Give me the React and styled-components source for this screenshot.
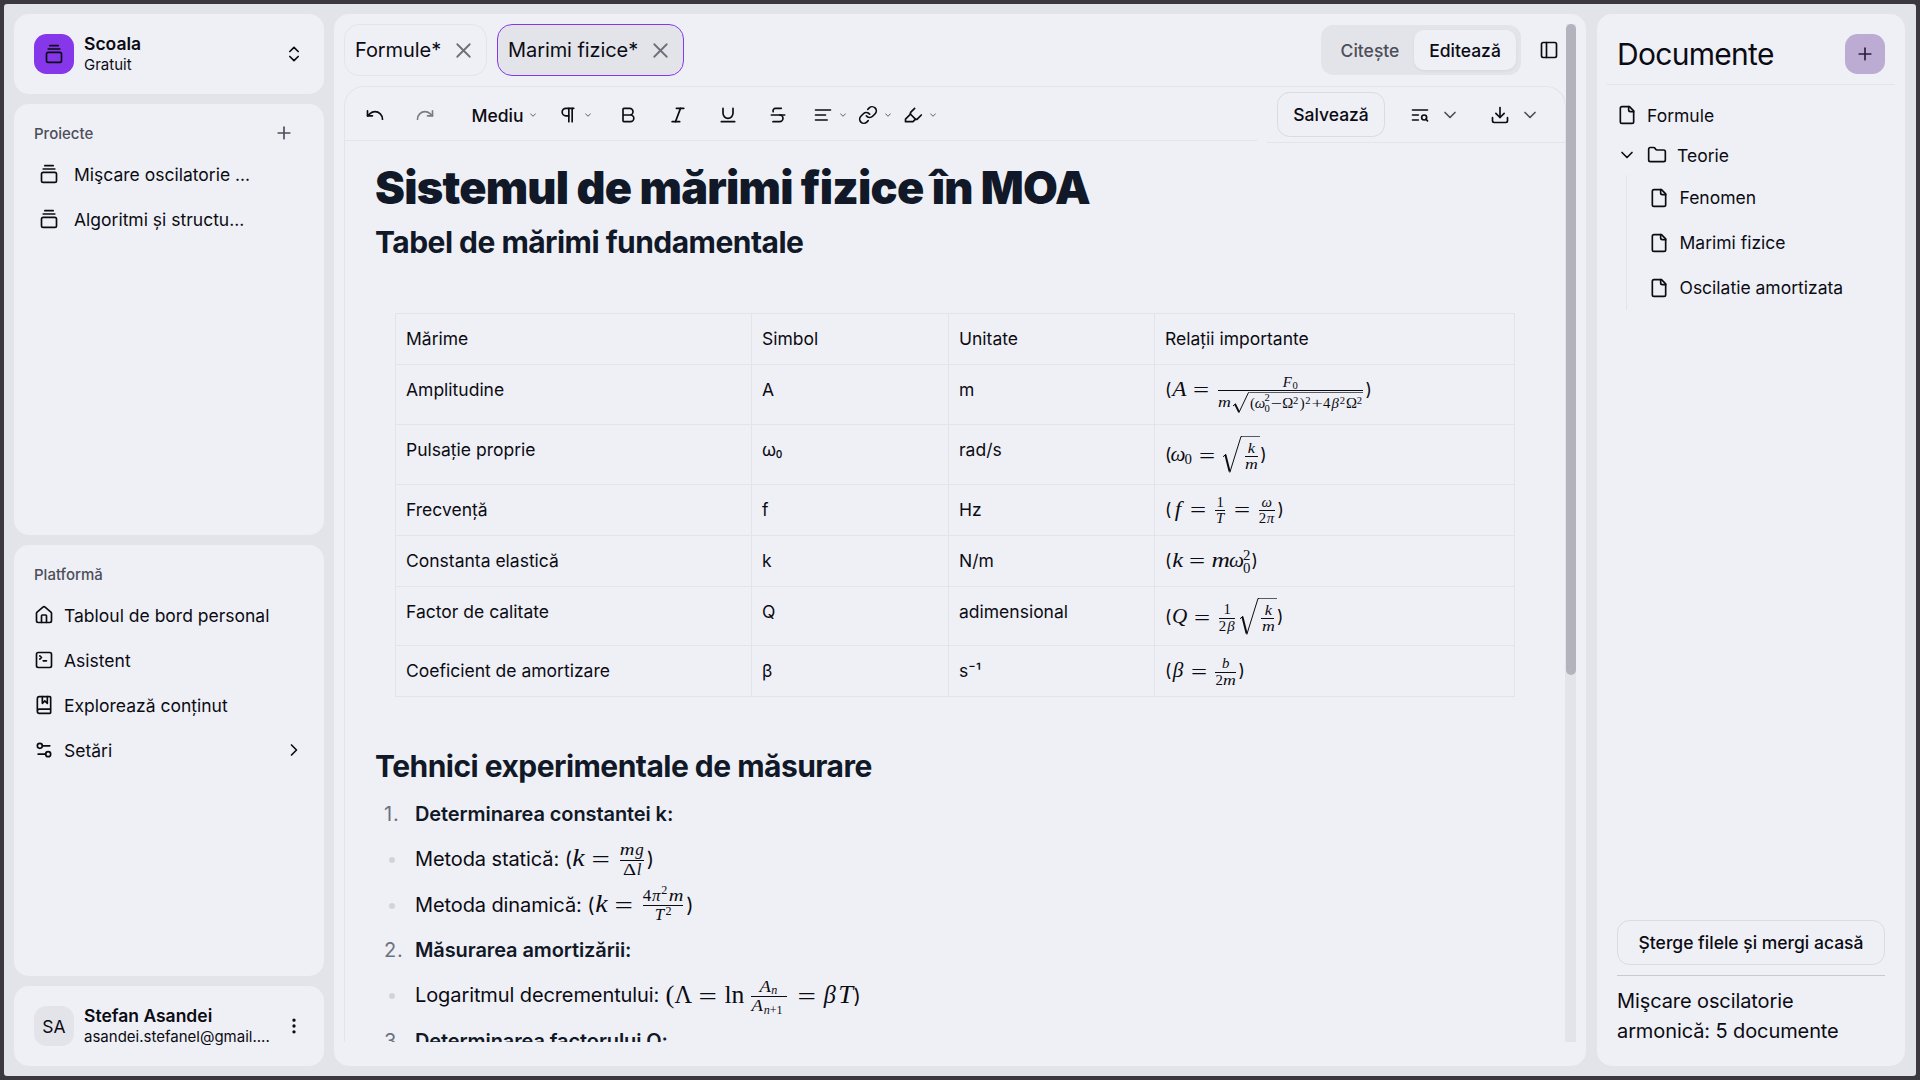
import React from "react";
import styled, { createGlobalStyle, css } from "styled-components";
import {
  House,
  SquareTerminal,
  BookMarked,
  Settings2,
  GalleryVerticalEnd,
  ChevronsUpDown,
  ChevronRight,
  ChevronDown,
  EllipsisVertical,
  Plus,
  X,
  Undo,
  Redo,
  Pilcrow,
  Bold,
  Italic,
  Underline,
  Strikethrough,
  Link,
  Highlighter,
  Download,
  PanelLeft,
  Folder,
} from "lucide-react";

const GlobalStyle = createGlobalStyle`
  * { box-sizing: border-box; }
  body {
    margin: 0;
    background: #3b393f;
    color: #0b0b14;
    font-family: Inter, "Liberation Sans", sans-serif;
    font-size: 17.5px;
  }
  svg { display: block; flex-shrink: 0; }
`;

const c = {
  bg: "#e3e4e9",
  panel: "#eff0f5",
  line: "#e3e4e9",
  border: "#dadbe0",
  muted: "#4d4e5a",
  purple: "#8637ea",
};

/* ---------- hand-drawn glyphs ---------- */

const Glyph = ({ d, size = 20, children }) => (
  <svg
    width={size}
    height={size}
    viewBox="0 0 24 24"
    fill="none"
    stroke="currentColor"
    strokeWidth="2"
    strokeLinecap="round"
    strokeLinejoin="round"
  >
    {d.map((p) => (
      <path key={p} d={p} />
    ))}
    {children}
  </svg>
);

const FileIcon = () => (
  <Glyph
    d={[
      "M15 2H6a2 2 0 0 0-2 2v16a2 2 0 0 0 2 2h12a2 2 0 0 0 2-2V7Z",
      "M14 2v4a2 2 0 0 0 2 2h4",
    ]}
  />
);
const AlignLeftIcon = () => <Glyph d={["M21 6H3", "M15 12H3", "M17 18H3"]} />;
const TextSearchIcon = () => (
  <Glyph d={["M21 6H3", "M10 12H3", "M10 18H3", "m21 19-1.9-1.9"]}>
    <circle cx="17" cy="15" r="3" />
  </Glyph>
);

/* ---------- page frame ---------- */

const Page = styled.div`
  width: 1920px;
  height: 1080px;
  padding: 4px;
  background: #3b393f;
`;
const Frame = styled.div`
  height: 100%;
  display: grid;
  grid-template-columns: 310px 1252px 309px;
  column-gap: 10px;
  padding: 10px 11px 10px 10px;
  background: ${c.bg};
  border-radius: 3px;
`;
const Column = styled.div`
  display: flex;
  flex-direction: column;
  gap: 10px;
  min-height: 0;
`;
const Panel = styled.section`
  background: ${c.panel};
  border-radius: 15px;
  min-height: 0;
`;

/* ---------- left sidebar ---------- */

const AccountCard = styled(Panel)`
  height: 80px;
  display: flex;
  align-items: center;
  padding: 0 20px;
`;
const Badge = styled.div`
  width: 40px;
  height: 40px;
  border-radius: 12.5px;
  display: grid;
  place-items: center;
  background: ${(p) => (p.$brand ? c.purple : c.bg)};
`;
const AccountText = styled.div`
  flex: 1;
  padding-left: 10px;
  padding-bottom: 1px;
  min-width: 0;
`;
const AccountName = styled.div`
  font-weight: 600;
  line-height: 21px;
`;
const AccountDetail = styled.div`
  font-size: 15px;
  line-height: 21px;
  white-space: nowrap;
`;
const MenuCard = styled(Panel)`
  flex: 1;
  padding: 10px 10px;
`;
const GroupLabel = styled.div`
  height: 38.5px;
  margin-bottom: -1px;
  padding: 0 20px 0 10px;
  display: flex;
  align-items: center;
  justify-content: space-between;
  font-size: 15px;
  font-weight: 500;
  color: ${c.muted};
`;
const MenuItem = styled.div`
  height: 45px;
  display: flex;
  align-items: center;
  gap: ${(p) => (p.$wide ? 15 : 10)}px;
  padding: 0 10px 0 ${(p) => (p.$wide ? 15 : 10)}px;
  & > span {
    flex: 1;
  }
`;

/* ---------- editor ---------- */

const EditorPanel = styled(Panel)`
  padding: 10px 10px 24px;
  display: flex;
`;
const EditorBody = styled.div`
  width: 1222px;
  display: flex;
  flex-direction: column;
  min-height: 0;
  overflow: hidden;
`;
const ScrollTrack = styled.div`
  width: 10px;
  background: ${c.bg};
`;
const ScrollThumb = styled.div`
  height: 651px;
  border-radius: 5px;
  background: #b2b3bd;
`;
const TabBar = styled.div`
  height: 52px;
  flex-shrink: 0;
  display: flex;
  align-items: center;
`;
const Tab = styled.div`
  height: 52px;
  margin-right: 10px;
  padding: 0 10px;
  border: 1px solid ${(p) => (p.$active ? c.purple : c.line)};
  background: ${(p) => (p.$active ? c.bg : "transparent")};
  border-radius: 15px;
  display: flex;
  align-items: center;
  font-size: 20px;
  letter-spacing: -0.08px;
  white-space: nowrap;
  width: ${(p) => p.$w}px;
  justify-content: space-between;
  & svg {
    color: #6d6e78;
  }
`;
const Segmented = styled.div`
  margin-left: auto;
  width: 200px;
  height: 50px;
  padding: 5px;
  border-radius: 12.5px;
  background: ${c.bg};
  display: flex;
  font-weight: 500;
`;
const Segment = styled.div`
  width: ${(p) => p.$w}px;
  display: grid;
  place-items: center;
  border-radius: 10px;
  color: ${(p) => (p.$active ? "#0b0b14" : c.muted)};
  ${(p) =>
    p.$active &&
    css`
      background: ${c.panel};
      box-shadow: 0 1px 3px rgba(0, 0, 0, 0.06);
    `}
`;
const PanelToggle = styled.div`
  margin: 0 7px 0 18px;
`;
const Sheet = styled.div`
  margin-top: 10px;
  flex: 1;
  min-height: 0;
  border: 1px solid ${c.line};
  border-bottom: 0;
  border-radius: 20px 20px 0 0;
`;
const Toolbar = styled.div`
  display: flex;
  justify-content: space-between;
  align-items: flex-start;
  height: 56px;
`;
const ToolsLeft = styled.div`
  width: 912px;
  height: 54px;
  padding-left: 5px;
  display: flex;
  align-items: center;
  border-bottom: 1px solid ${c.line};
`;
const ToolsRight = styled.div`
  width: 298px;
  height: 56px;
  padding-left: 10px;
  display: flex;
  align-items: center;
  border-bottom: 1px solid ${c.line};
`;
const ToolButton = styled.div`
  width: 50px;
  height: 50px;
  display: grid;
  place-items: center;
  padding-top: 3px;
  opacity: ${(p) => (p.$disabled ? 0.5 : 1)};
`;
const ToolMenu = styled.div`
  display: flex;
  align-items: center;
  gap: ${(p) => p.$gap || 5}px;
  padding-top: 3px;
  margin: 0 10px 0 ${(p) => p.$lead || 0}px;
  font-weight: 500;
`;
const SmallChevron = styled(ChevronDown)`
  opacity: 0.75;
`;
const OutlineButton = styled.div`
  height: 45px;
  width: ${(p) => p.$w};
  display: grid;
  place-items: center;
  border: 1px solid ${c.border};
  border-radius: 12.5px;
  font-weight: 500;
`;
const SplitMenu = styled.div`
  display: flex;
  align-items: center;
  gap: 10px;
  margin-left: ${(p) => p.$lead}px;
  padding-top: 1px;
  & svg:last-child {
    color: ${c.muted};
  }
`;

/* ---------- document ---------- */

const Doc = styled.article`
  padding: 20px 50px 0 30px;
`;
const H1 = styled.h1`
  margin: 0;
  font-size: 45px;
  line-height: 50px;
  font-weight: 900;
  letter-spacing: -0.78px;
  color: #111827;
`;
const H2 = styled.h2`
  margin: ${(p) => p.$top}px 0 0;
  font-size: 30px;
  line-height: 40px;
  font-weight: 700;
  letter-spacing: -0.53px;
  color: #111827;
`;
const Table = styled.div`
  margin: 51px 0 0 20px;
  width: 1120px;
  border: 1px solid ${c.line};
  border-width: 1px 0 0 1px;
`;
const Row = styled.div`
  display: grid;
  grid-template-columns: 356px 197px 206px 360px;
  height: ${(p) => p.$h}px;
`;
const Cell = styled.div`
  border: 1px solid ${c.line};
  border-width: 0 1px 1px 0;
  padding: 10px 10px 0;
  line-height: 30px;
`;
const LowZero = styled.span`
  font-family: "Noto Sans", sans-serif;
  line-height: 1;
`;
const List = styled.div`
  padding-top: 5px;
  font-size: 20px;
  letter-spacing: -0.1px;
`;
const ListItem = styled.div`
  height: 45.45px;
  display: flex;
  align-items: center;
  white-space: pre;
`;
const Marker = styled.div`
  width: 40px;
  color: #6b7280;
  padding-left: 9px;
  letter-spacing: 0.8px;
`;
const Bullet = styled.div`
  width: 6px;
  height: 6px;
  margin: 2px 20px 0 14px;
  border-radius: 50%;
  background: #d1d5db;
`;
const Strong = styled.strong`
  font-weight: 600;
  color: #111827;
`;

const Formula = styled.div`
  display: flex;
  align-items: center;
  white-space: nowrap;
  color: #0b0b14;
  font-family: "Liberation Serif", serif;
  font-size: ${(p) => p.$size || 21.175}px;
  letter-spacing: 0;
  height: ${(p) => p.$h || 30}px;
  padding-top: ${(p) => p.$drop || 1.2}px;
  line-height: 1;
`;
const Paren = styled.span`
  font-family: Inter, sans-serif;
  font-size: ${(p) => p.$size || 17.5}px;
  padding-bottom: 0.12em;
`;
const SymBox = styled.span`
  display: flex;
  justify-content: center;
  width: ${(p) => p.$w}em;
  padding-bottom: ${(p) => (p.$script ? 0 : 0.17)}em;
  font-style: ${(p) => (p.$up ? "normal" : "italic")};
  & > span {
    transform: scaleX(${(p) => p.$sx || 1});
  }
`;
const Sym = ({ w, up, script, sx, children }) => (
  <SymBox $w={w} $up={up} $script={script} $sx={sx}>
    <span>{children}</span>
  </SymBox>
);
const RelBox = styled.span`
  display: flex;
  justify-content: center;
  width: 0.778em;
  margin: 0 0.278em;
  & > span {
    transform: scaleX(1.35);
  }
`;
const Eq = () => (
  <RelBox>
    <span>=</span>
  </RelBox>
);
const Frac = styled.span`
  display: flex;
  flex-direction: column;
  align-items: center;
  font-size: 0.7em;
  margin: 0 0.17em;
`;
const Num = styled.span`
  display: flex;
  justify-content: center;
  height: ${(p) => p.$half || 1.25}em;
  align-self: stretch;
  align-items: flex-end;
  border-bottom: 1px solid currentColor;
  line-height: 1.1;
`;
const Den = styled.span`
  display: flex;
  justify-content: center;
  height: ${(p) => p.$half || 1.25}em;
  align-items: flex-start;
  line-height: 1.02;
  margin-bottom: -1px;
`;
const Scripts = styled.span`
  display: flex;
  flex-direction: column;
  align-items: flex-start;
  font-size: 0.7em;
  line-height: ${(p) => p.$lh || 0.9};
  width: 0.57em;
  padding-top: ${(p) => p.$down || 0}em;
`;
/* a raised or lowered index inside a fraction line */
const Index = styled.span`
  display: flex;
  width: ${(p) => p.$w || 0.43}em;
  & > span {
    font-size: 0.715em;
    transform: translateY(${(p) => p.$y}px);
  }
`;
const RootBox = styled.span`
  display: flex;
  height: ${(p) => p.$h}px;
`;
const RootBody = styled.span`
  display: flex;
  align-items: center;
  border-top: 1px solid #5a5a66;
`;
const BigRoot = ({ children }) => (
  <RootBox $h={40}>
    <svg width="21" height="40" viewBox="0 0 21 40" fill="none" stroke="#0b0b14">
      <path d="M2 20.8 L5 18.2" strokeWidth="1" />
      <path d="M4.4 18.8 L8.6 35.5" strokeWidth="2" />
      <path d="M8.8 36.5 L20 0.5 H21" strokeWidth="1" />
    </svg>
    <RootBody>{children}</RootBody>
  </RootBox>
);
const SmallRoot = ({ children }) => (
  <RootBox $h={21}>
    <svg width="18.5" height="21" viewBox="0 0 18.5 21" fill="none" stroke="#0b0b14">
      <path d="M2 14 L4.6 11.8" strokeWidth="1" />
      <path d="M4 12 L8 20" strokeWidth="1.8" />
      <path d="M7.8 20.8 L17.5 0.5 H18.5" strokeWidth="1" />
    </svg>
    <RootBody>{children}</RootBody>
  </RootBox>
);
const AmplitudeDen = styled.span`
  display: flex;
  align-items: center;
  padding-top: 1px;
  line-height: 1;
`;
const Stack = styled.span`
  display: flex;
  flex-direction: column;
  width: 0.43em;
  padding-bottom: ${(p) => (p.$single ? 6.6 : 0)}px;
  & > span {
    font-size: 0.715em;
    line-height: 11px;
  }
`;
const Spacer = styled.span`
  width: 0.167em;
`;

const S = (props) => <Sym script {...props} />;

const KOverM = () => (
  <Frac>
    <Num><S w={0.878} sx={1.1}>k</S></Num>
    <Den><S w={0.878} sx={1.2}>m</S></Den>
  </Frac>
);
const Amplitude = () => (
  <Formula $h={30.6}>
    <Paren>(</Paren>
    <Sym w={0.75} sx={1.1}>A</Sym>
    <Eq />
    <Frac>
      <Num $half={1.7}>
        <S w={0.68}>F</S>
        <Index $y={1}><span>0</span></Index>
      </Num>
      <Den $half={1.7}>
        <AmplitudeDen>
          <S w={0.878} sx={1.2}>m</S>
          <SmallRoot>
            <S up w={0.389}>(</S>
            <S w={0.622}>ω</S>
            <Stack>
              <span>2</span>
              <span>0</span>
            </Stack>
            <S up w={0.778} sx={1.35}>−</S>
            <S up w={0.722}>Ω</S>
            <Stack $single><span>2</span></Stack>
            <S up w={0.389}>)</S>
            <Stack $single><span>2</span></Stack>
            <S up w={0.778} sx={1.35}>+</S>
            <S up w={0.5}>4</S>
            <S w={0.62}>β</S>
            <Stack $single><span>2</span></Stack>
            <S up w={0.722}>Ω</S>
            <Stack $single><span>2</span></Stack>
          </SmallRoot>
        </AmplitudeDen>
      </Den>
    </Frac>
    <Paren>)</Paren>
  </Formula>
);
const Omega = () => (
  <Formula $h={41}>
    <Paren>(</Paren>
    <Sym w={0.622}>ω</Sym>
    <Scripts $down={0.49} $lh={1}><span>0</span></Scripts>
    <Eq />
    <BigRoot><KOverM /></BigRoot>
    <Paren>)</Paren>
  </Formula>
);
const Frequency = () => (
  <Formula $h={30.6}>
    <Paren>(</Paren>
    <Sym w={0.597} sx={1.1}>f</Sym>
    <Eq />
    <Frac>
      <Num><S up w={0.72}>1</S></Num>
      <Den><S w={0.72}>T</S></Den>
    </Frac>
    <Eq />
    <Frac>
      <Num><S w={1.1}>ω</S></Num>
      <Den><S up w={0.5}>2</S><S w={0.6}>π</S></Den>
    </Frac>
    <Paren>)</Paren>
  </Formula>
);
const Elastic = () => (
  <Formula $h={30.6}>
    <Paren>(</Paren>
    <Sym w={0.55} sx={1.15}>k</Sym>
    <Eq />
    <Sym w={0.878} sx={1.2}>m</Sym>
    <Sym w={0.622}>ω</Sym>
    <Scripts><span>2</span><span>0</span></Scripts>
    <Paren>)</Paren>
  </Formula>
);
const Quality = () => (
  <Formula $h={41}>
    <Paren>(</Paren>
    <Sym w={0.79}>Q</Sym>
    <Eq />
    <Frac>
      <Num><S up w={1.12}>1</S></Num>
      <Den><S up w={0.5}>2</S><S w={0.62}>β</S></Den>
    </Frac>
    <BigRoot><KOverM /></BigRoot>
    <Paren>)</Paren>
  </Formula>
);
const Damping = () => (
  <Formula $h={31}>
    <Paren>(</Paren>
    <Sym w={0.62}>β</Sym>
    <Eq />
    <Frac>
      <Num><S w={1.4}>b</S></Num>
      <Den><S up w={0.5}>2</S><S w={0.878} sx={1.2}>m</S></Den>
    </Frac>
    <Paren>)</Paren>
  </Formula>
);
const StaticMethod = () => (
  <Formula $size={24.2} $drop={2.6}>
    <Paren $size={20}>(</Paren>
    <Sym w={0.54} sx={1.15}>k</Sym>
    <Eq />
    <Frac>
      <Num><S w={0.878} sx={1.2}>m</S><S w={0.52}>g</S></Num>
      <Den><S up w={0.833} sx={1.2}>Δ</S><S w={0.32}>l</S></Den>
    </Frac>
    <Paren $size={20}>)</Paren>
  </Formula>
);
const DynamicMethod = () => (
  <Formula $size={24.2} $drop={2.6}>
    <Paren $size={20}>(</Paren>
    <Sym w={0.54} sx={1.15}>k</Sym>
    <Eq />
    <Frac>
      <Num>
        <S up w={0.5}>4</S>
        <S w={0.6}>π</S>
        <Index $y={-8.5}><span>2</span></Index>
        <S w={0.878} sx={1.2}>m</S>
      </Num>
      <Den>
        <S w={0.72}>T</S>
        <Index $y={-1}><span>2</span></Index>
      </Den>
    </Frac>
    <Paren $size={20}>)</Paren>
  </Formula>
);
const Decrement = () => (
  <Formula $size={24.2} $drop={2.6}>
    <Sym up w={0.42} sx={1.1}>(</Sym>
    <Sym up w={0.694}>Λ</Sym>
    <Eq />
    <Sym up w={0.834} sx={1.06}>ln</Sym>
    <Spacer />
    <Frac>
      <Num $half={1.5}>
        <S w={0.75} sx={1.1}>A</S>
        <Index $w={0.5} $y={1}><span><i>n</i></span></Index>
      </Num>
      <Den $half={1.5}>
        <S w={0.75} sx={1.1}>A</S>
        <Index $w={1.4} $y={7}><span><i>n</i>+1</span></Index>
      </Den>
    </Frac>
    <Eq />
    <Sym w={0.6}>β</Sym>
    <Sym w={0.68} sx={1.1}>T</Sym>
    <Paren $size={20}>)</Paren>
  </Formula>
);

const rows = [
  [51, "Mărime", "Simbol", "Unitate", "Relații importante"],
  [60, "Amplitudine", "A", "m", <Amplitude />],
  [60, "Pulsație proprie", <>ω<LowZero>₀</LowZero></>, "rad/s", <Omega />],
  [51, "Frecvență", "f", "Hz", <Frequency />],
  [51, "Constanta elastică", "k", "N/m", <Elastic />],
  [59, "Factor de calitate", "Q", "adimensional", <Quality />],
  [51, "Coeficient de amortizare", "β", "s⁻¹", <Damping />],
];

/* ---------- documents panel ---------- */

const DocsPanel = styled(Panel)`
  margin-left: 1px;
  display: flex;
  flex-direction: column;
  padding: 0 10px;
`;
const DocsHeader = styled.div`
  height: 71px;
  padding: 9px 10px 0;
  display: flex;
  align-items: center;
  justify-content: space-between;
  border-bottom: 1px solid ${c.line};
  font-size: 30px;
  letter-spacing: -0.7px;
`;
const AddButton = styled.div`
  width: 40px;
  height: 40px;
  border-radius: 12.5px;
  background: #bcabd3;
  color: #2b1f3c;
  display: grid;
  place-items: center;
`;
const Tree = styled.div`
  flex: 1;
  padding: 10px 10px 0;
`;
const TreeItem = styled.div`
  height: ${(p) => p.$h}px;
  display: flex;
  align-items: center;
  gap: ${(p) => p.$gap || 10}px;
`;
const Branch = styled.div`
  margin-left: 9px;
  padding-left: 22px;
  border-left: 1px solid ${c.line};
`;
const DocsFooter = styled.div`
  padding: 0 10px;
  height: 146px;
`;
const FooterText = styled.div`
  margin-top: 10px;
  padding-top: 10px;
  border-top: 1px solid #c9cad1;
  font-size: 20px;
  line-height: 30px;
  letter-spacing: -0.1px;
`;

export default function App() {
  return (
    <Page>
      <GlobalStyle />
      <Frame>
        <Column>
          <AccountCard>
            <Badge $brand><GalleryVerticalEnd size={20} /></Badge>
            <AccountText>
              <AccountName>Scoala</AccountName>
              <AccountDetail>Gratuit</AccountDetail>
            </AccountText>
            <ChevronsUpDown size={20} />
          </AccountCard>
          <MenuCard>
            <GroupLabel>Proiecte<Plus size={20} /></GroupLabel>
            <MenuItem $wide><GalleryVerticalEnd size={20} /><span>Mişcare oscilatorie ...</span></MenuItem>
            <MenuItem $wide><GalleryVerticalEnd size={20} /><span>Algoritmi și structu...</span></MenuItem>
          </MenuCard>
          <MenuCard>
            <GroupLabel>Platformă</GroupLabel>
            <MenuItem><House size={20} /><span>Tabloul de bord personal</span></MenuItem>
            <MenuItem><SquareTerminal size={20} /><span>Asistent</span></MenuItem>
            <MenuItem><BookMarked size={20} /><span>Explorează conținut</span></MenuItem>
            <MenuItem><Settings2 size={20} /><span>Setări</span><ChevronRight size={20} /></MenuItem>
          </MenuCard>
          <AccountCard>
            <Badge>SA</Badge>
            <AccountText>
              <AccountName>Stefan Asandei</AccountName>
              <AccountDetail>asandei.stefanel@gmail....</AccountDetail>
            </AccountText>
            <EllipsisVertical size={20} />
          </AccountCard>
        </Column>

        <EditorPanel>
          <EditorBody>
            <TabBar>
              <Tab $w={143}>Formule*<X size={25} strokeWidth={1.7} /></Tab>
              <Tab $w={187} $active>Marimi fizice*<X size={25} strokeWidth={1.7} /></Tab>
              <Segmented>
                <Segment $w={88}>Citește</Segment>
                <Segment $w={102} $active>Editează</Segment>
              </Segmented>
              <PanelToggle><PanelLeft size={20} /></PanelToggle>
            </TabBar>
            <Sheet>
              <Toolbar>
                <ToolsLeft>
                  <ToolButton><Undo size={20} /></ToolButton>
                  <ToolButton $disabled><Redo size={20} /></ToolButton>
                  <ToolMenu $lead={21.5} $gap={4.5}>Mediu<SmallChevron size={10} /></ToolMenu>
                  <ToolMenu $lead={10}><Pilcrow size={20} /><SmallChevron size={10} /></ToolMenu>
                  <ToolButton><Bold size={20} /></ToolButton>
                  <ToolButton><Italic size={20} /></ToolButton>
                  <ToolButton><Underline size={20} /></ToolButton>
                  <ToolButton><Strikethrough size={20} /></ToolButton>
                  <ToolMenu $lead={10}><AlignLeftIcon /><SmallChevron size={10} /></ToolMenu>
                  <ToolMenu><Link size={20} /><SmallChevron size={10} /></ToolMenu>
                  <ToolMenu><Highlighter size={20} /><SmallChevron size={10} /></ToolMenu>
                </ToolsLeft>
                <ToolsRight>
                  <OutlineButton $w="108px">Salvează</OutlineButton>
                  <SplitMenu $lead={25}><TextSearchIcon /><ChevronDown size={20} /></SplitMenu>
                  <SplitMenu $lead={30}><Download size={20} /><ChevronDown size={20} /></SplitMenu>
                </ToolsRight>
              </Toolbar>
              <Doc>
                <H1>Sistemul de mărimi fizice în MOA</H1>
                <H2 $top={9}>Tabel de mărimi fundamentale</H2>
                <Table>
                  {rows.map(([h, ...cells]) => (
                    <Row key={cells[0]} $h={h}>
                      {cells.map((cell, i) => (
                        <Cell key={i}>{cell}</Cell>
                      ))}
                    </Row>
                  ))}
                </Table>
                <H2 $top={49}>Tehnici experimentale de măsurare</H2>
                <List>
                  <ListItem><Marker>1.</Marker><Strong>Determinarea constantei k:</Strong></ListItem>
                  <ListItem><Bullet />Metoda statică: <StaticMethod /></ListItem>
                  <ListItem><Bullet />Metoda dinamică: <DynamicMethod /></ListItem>
                  <ListItem><Marker>2.</Marker><Strong>Măsurarea amortizării:</Strong></ListItem>
                  <ListItem><Bullet />Logaritmul decrementului: <Decrement /></ListItem>
                  <ListItem><Marker>3.</Marker><Strong>Determinarea factorului Q:</Strong></ListItem>
                </List>
              </Doc>
            </Sheet>
          </EditorBody>
          <ScrollTrack><ScrollThumb /></ScrollTrack>
        </EditorPanel>

        <DocsPanel>
          <DocsHeader>
            Documente
            <AddButton><Plus size={20} /></AddButton>
          </DocsHeader>
          <Tree>
            <TreeItem $h={40}><FileIcon />Formule</TreeItem>
            <TreeItem $h={40}><ChevronDown size={20} /><Folder size={20} />Teorie</TreeItem>
            <Branch>
              <TreeItem $h={45} $gap={10.5}><FileIcon />Fenomen</TreeItem>
              <TreeItem $h={45} $gap={10.5}><FileIcon />Marimi fizice</TreeItem>
              <TreeItem $h={45} $gap={10.5}><FileIcon />Oscilatie amortizata</TreeItem>
            </Branch>
          </Tree>
          <DocsFooter>
            <OutlineButton $w="100%">Șterge filele și mergi acasă</OutlineButton>
            <FooterText>Mişcare oscilatorie armonică: 5 documente</FooterText>
          </DocsFooter>
        </DocsPanel>
      </Frame>
    </Page>
  );
}
